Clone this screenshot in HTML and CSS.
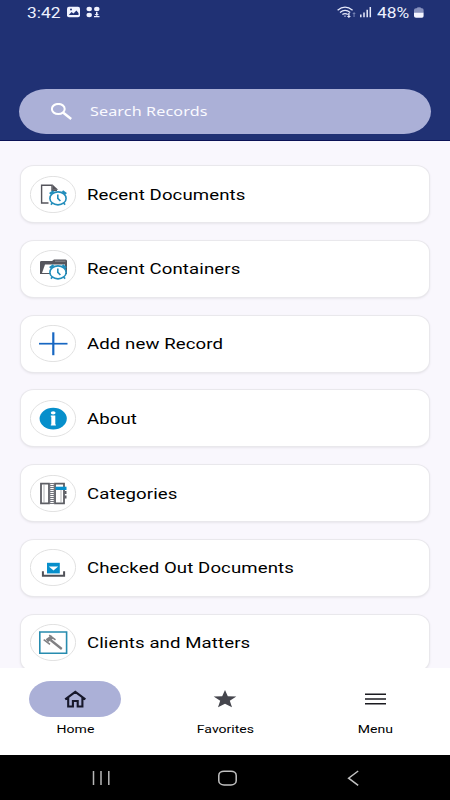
FILE: index.html
```html
<!DOCTYPE html>
<html lang="en">
<head>
<meta charset="utf-8">
<title>Records</title>
<link rel="stylesheet" href="styles.css">
</head>
<body>
<div class="app">
  <header class="header">
    <div class="status">
      <span class="time"><span class="wide">3:42</span></span>
      <svg class="status-left" viewBox="0 0 34 12" width="34" height="12">
        <rect x="0" y="0.8" width="13" height="10.4" rx="2" fill="#f1f3ff"/>
        <path d="M1.8 9 4.5 6 6.5 7.5 9.4 4.5 11.5 7V9Z" fill="#203174"/><circle cx="4" cy="3.6" r="1" fill="#203174"/>
        <g fill="#f1f3ff"><ellipse cx="22.2" cy="3" rx="2.7" ry="2.2"/><ellipse cx="29.8" cy="3" rx="2.7" ry="2.2"/><ellipse cx="22.2" cy="9" rx="2.7" ry="2.2"/><path d="M29 6h1.5v2H32l-2.2 2L27.5 8H29ZM27 10h5.5v1.2H27Z"/></g>
      </svg>
      <svg class="status-right" viewBox="0 0 36 13" width="36" height="13">
        <g fill="none" stroke="#e7eafb" stroke-width="1.3"><path d="M.6 4.3Q8 -2 15.6 4.3M3 6.5Q8 2.4 13.2 6.5M5.4 8.6Q8 6.5 10.8 8.6"/></g>
        <path d="M6.8 9.8h2.4L8 11ZM11.2 7h1.4v3H14l-2.1 2L9.8 10h1.4Z" fill="#e7eafb"/><path d="M16.5 11V8h-1.2l1.8-2 1.6 2h-1.1v3Z" fill="#7380b1"/>
        <path d="M23.8 8.5v2.8M27 6.5v4.8M30.2 3.8v7.5M33.3 1v10.3" stroke="#e7eafb" stroke-width="1.5"/>
      </svg>
      <span class="percent"><span class="wide">48%</span></span>
      <svg class="battery" viewBox="0 0 10 11" width="10" height="11"><path d="M0 6V3Q0 1.3 2 1.3H2.6Q2.8.2 5 .2T7.4 1.3H8Q9.6 1.3 9.6 3V6Z" fill="#8791bd"/><path d="M0 5.7H9.6V9Q9.6 10.7 8 10.7H2Q0 10.7 0 9Z" fill="#f4f5ff"/></svg>
    </div>
    <div class="search">
      <svg viewBox="0 0 22 18" width="22" height="18" fill="none" stroke="#fff"><ellipse cx="7.3" cy="6" rx="6.4" ry="5.1" stroke-width="2"/><path d="m12 9.6 8.2 6.4" stroke-width="2.5"/></svg>
      <span class="placeholder wide">Search Records</span>
    </div>
  </header>

  <main class="list">
    <div class="card">
      <svg class="icon" viewBox="0 0 46 37"><ellipse class="ring" cx="23" cy="18.5" rx="22.6" ry="18.1"/>
        <path d="M18.5 27H11.6V9.2H22v5h5" fill="none" stroke="#55555c" stroke-width="1.4"/><path d="m22.5 8.5 5.7 5.2h-5.7Z" fill="#55555c"/>
        <g class="clock"><ellipse cx="28" cy="22.4" rx="8.1" ry="6.5"/><path d="m19.8 17.9 3.8-2.8M36.2 17.9l-3.8-2.8" class="bells"/><path d="M27.8 18.4v4l2.6 2.6M22.5 27.2l-1.7 1.4M33.5 27.2l1.7 1.4"/></g></svg>
      <span class="label wide">Recent Documents</span>
    </div>
    <div class="card">
      <svg class="icon" viewBox="0 0 46 37"><ellipse class="ring" cx="23" cy="18.5" rx="22.6" ry="18.1"/>
        <path d="M10 24V12.2Q10 11 11.4 11H22l2-1.5H35.5Q37 9.5 37 11V24Z" fill="#55555c"/><path d="M25 11.2H35.5" stroke="#a4a4a9" stroke-width=".7"/><path d="m15 14.5h20V23H12Z" fill="#fff"/>
        <g class="clock"><ellipse cx="28" cy="22.4" rx="8.1" ry="6.5"/><path d="m19.8 17.9 3.8-2.8M36.2 17.9l-3.8-2.8" class="bells"/><path d="M27.8 18.4v4l2.6 2.6M22.5 27.2l-1.7 1.4M33.5 27.2l1.7 1.4"/></g></svg>
      <span class="label wide">Recent Containers</span>
    </div>
    <div class="card">
      <svg class="icon" viewBox="0 0 46 37"><ellipse class="ring" cx="23" cy="18.5" rx="22.6" ry="18.1"/>
        <path d="M9 18.7H37.5" stroke="#1767c2" stroke-width="1.7"/><path d="M23.3 7.3V30.2" stroke="#1767c2" stroke-width="2.2"/></svg>
      <span class="label wide">Add new Record</span>
    </div>
    <div class="card">
      <svg class="icon" viewBox="0 0 46 37"><ellipse class="ring" cx="23" cy="18.5" rx="22.6" ry="18.1"/>
        <ellipse cx="23.2" cy="18.6" rx="13.6" ry="10.9" fill="#078fcb"/><ellipse cx="23.2" cy="12.8" rx="2.4" ry="1.6" fill="#fff"/><path d="M20.8 15.6h4.5v9h.6v1h-5.1v-1h.5v-7.9h-.5Z" fill="#fff"/></svg>
      <span class="label wide">About</span>
    </div>
    <div class="card">
      <svg class="icon" viewBox="0 0 46 37"><ellipse class="ring" cx="23" cy="18.5" rx="22.6" ry="18.1"/>
        <path d="M11 8.6h8v19.8h-8ZM25 8.6h9v19.8h-9Z" fill="#fff" stroke="#5d5e64" stroke-width="1.8"/><path d="M14 9v19M31 14v14" stroke="#a0a1a5" stroke-width=".8"/><path d="M19.8 8v21M24.2 8v21" stroke="#707178" stroke-width="1"/><path d="M22 8v21" stroke="#777980" stroke-width="4" stroke-dasharray="1 1"/><path d="M25.5 11.7H36.5V15H25.5Z" fill="#078fcb"/><path d="M35.5 16v3M35.5 20.5v3" stroke="#5d5e64" stroke-width="2"/></svg>
      <span class="label wide">Categories</span>
    </div>
    <div class="card">
      <svg class="icon" viewBox="0 0 46 37"><ellipse class="ring" cx="23" cy="18.5" rx="22.6" ry="18.1"/>
        <path d="M17 13.8h12.8v10.6H17Z" fill="#078fcb"/><path d="M18.8 17.4h9.4L23.5 21.5Z" fill="#fff"/><path d="M12.9 22.3v4.5h21.2v-4.5" fill="none" stroke="#505158" stroke-width="2"/></svg>
      <span class="label wide">Checked Out Documents</span>
    </div>
    <div class="card">
      <svg class="icon" viewBox="0 0 46 37"><ellipse class="ring" cx="23" cy="18.5" rx="22.6" ry="18.1"/>
        <path d="M9.8 8h26.8v21.3H9.8Z" fill="#fff" stroke="#278caf" stroke-width="1.6"/><g stroke="#808083" fill="none"><path d="m16.8 16.8 5.4-3.9" stroke-width="3.8"/><path d="m13.7 15.7 6.3 4.6M19.2 11.2l6.3 4.6" stroke-width="1.6"/><path d="m20.5 16 11.3 9" stroke-width="2.3"/></g></svg>
      <span class="label wide">Clients and Matters</span>
    </div>
  </main>

  <nav class="tabs">
    <div class="tab active">
      <span class="pill"><svg viewBox="0 0 22 18" width="22" height="18" fill="none" stroke="#17182b" stroke-width="2.1"><path d="M1.2 9.4 11.3 1.8 21.4 9.4M4.2 7.8v8.7h4.7V11h4.8v5.5h4.7V7.8"/></svg></span>
      <span class="tab-label"><span class="wide">Home</span></span>
    </div>
    <div class="tab">
      <span class="pill"><svg viewBox="0 0 24 18" width="24" height="18"><path d="M12 0 14.8 6.2 23.3 6.6 16.8 10.8 19 17.3 12 13.8 5 17.3 7.2 10.8.7 6.6 9.2 6.2Z" fill="#45464d"/></svg></span>
      <span class="tab-label"><span class="wide">Favorites</span></span>
    </div>
    <div class="tab">
      <span class="pill"><svg viewBox="0 0 21 12" width="21" height="12"><path d="M0 1.3H21M0 6H21M0 10.7H21" stroke="#1b1b20" stroke-width="1.6"/></svg></span>
      <span class="tab-label"><span class="wide">Menu</span></span>
    </div>
  </nav>

  <footer class="system">
    <svg viewBox="0 0 18 16" width="18" height="16"><path d="M1.5 1v14M9 1v14M16.8 1v14" stroke="#b8b8b8" stroke-width="1.5"/></svg>
    <svg viewBox="0 0 20 16" width="20" height="16"><rect x=".8" y="1.2" width="17.4" height="13.8" rx="5.2" ry="4.2" fill="none" stroke="#c2c2c2" stroke-width="1.5"/></svg>
    <svg viewBox="0 0 14 16" width="14" height="16"><path d="M12.2 1 2.6 8.2l9.6 7.2" fill="none" stroke="#c2c2c2" stroke-width="1.5"/></svg>
  </footer>
</div>
</body>
</html>
```
FILE: styles.css
```css
* { box-sizing: border-box; }
body { margin: 0; font-family: Roboto, "Liberation Sans", sans-serif; }
svg { display: block; flex: none; }
.app {
  width: 450px;
  height: 800px;
  overflow: hidden;
  display: flex;
  flex-direction: column;
  background: #f9f7fd;
}
/* Lettering is drawn wider than its natural proportions. */
.wide {
  display: inline-block;
  white-space: nowrap;
  transform: scaleX(1.24);
  transform-origin: left center;
}
.header {
  flex: none;
  height: 141px;
  background: #203174;
  border-bottom: 1px solid #0b1256;
}
.status {
  height: 24px;
  padding: 0 26px 0 27px;
  display: flex;
  align-items: center;
  color: #eef1ff;
  font-size: 14px;
}
.time { width: 40px; padding-top: 1px; }
.status-right { margin-left: auto; }
.percent { width: 37px; margin-left: 4px; padding-top: 1px; }
.search {
  height: 45px;
  margin: 65px 19px 0;
  padding-left: 32px;
  display: flex;
  align-items: center;
  gap: 17px;
  background: #abb0d7;
  border-radius: 27px / 22.5px;
}
.placeholder {
  margin-top: -2px;
  font-family: "Noto Sans", sans-serif;
  font-size: 13px;
  letter-spacing: .1px;
  color: #fafaff;
}
.list {
  flex: 1;
  min-height: 0;
  overflow: hidden;
  padding: 25px 21px 0;
  display: flex;
  flex-direction: column;
  gap: 18.75px;
}
.card {
  flex: none;
  height: 56px;
  padding-left: 9px;
  display: flex;
  align-items: center;
  gap: 10.5px;
  background: #fff;
  border-radius: 13px / 11px;
  box-shadow: 0 0 0 1px #e9e8ec, 0 1px 3px #d6d4da;
}
.icon { width: 46px; height: 37px; }
.ring { fill: #fff; stroke: #dedede; stroke-width: .9; }
.clock { fill: #fff; stroke: #218dbb; stroke-width: 1.6; }
.clock .bells { stroke-width: 2.4; }
.label { margin-top: 1px; font-size: 15px; letter-spacing: .08px; color: #000; }
.tabs {
  flex: none;
  height: 87px;
  padding-top: 13px;
  display: grid;
  grid-template-columns: repeat(3, 1fr);
  background: #fff;
}
.tab { display: flex; flex-direction: column; align-items: center; }
.pill {
  width: 92px;
  height: 36px;
  display: flex;
  align-items: center;
  justify-content: center;
  border-radius: 22px / 18px;
}
.active .pill { background: #abb0d7; }
.tab-label { margin-top: 5px; font-size: 11.5px; line-height: 15px; color: #000; }
.tab-label .wide { transform: scaleX(1.22); transform-origin: center; }
.system {
  flex: none;
  height: 45px;
  padding: 0 90px 0 92px;
  display: flex;
  align-items: center;
  justify-content: space-between;
  background: #000;
}
```
